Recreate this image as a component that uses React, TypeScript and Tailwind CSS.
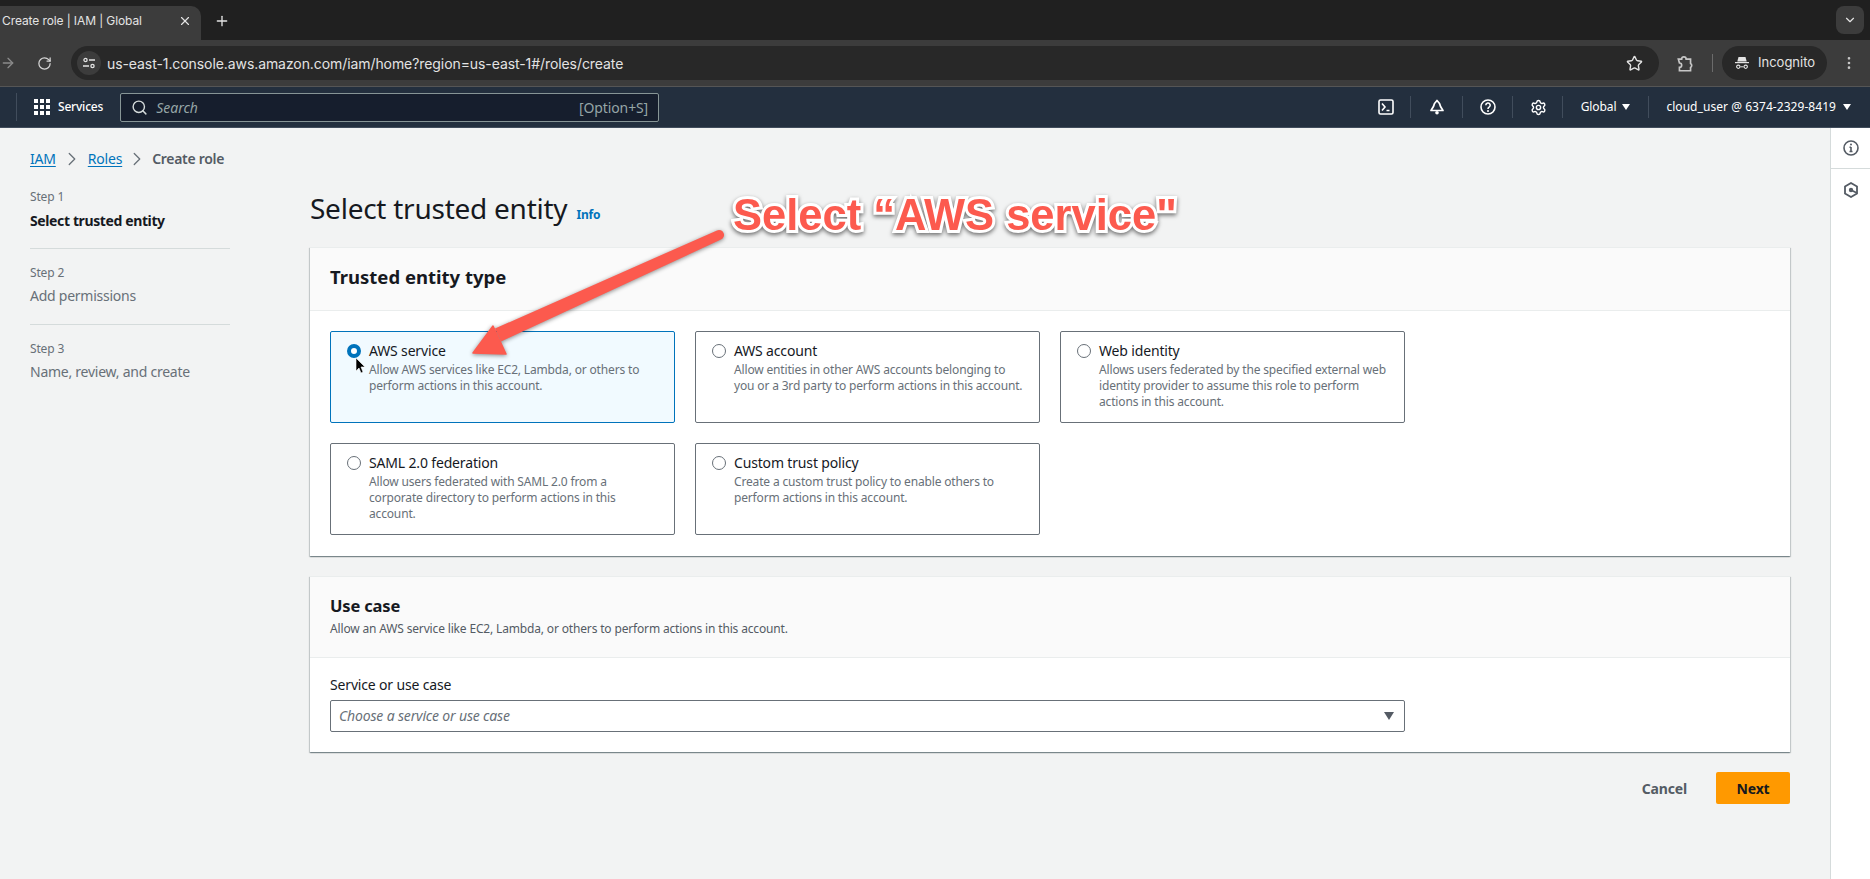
import React from 'react';
import { ArrowRight, ChevronDown, ChevronRight, EllipsisVertical, Plus, RotateCw, Search, Settings, Star, X } from 'lucide-react';

interface TrustOption {
  title: string;
  lines: string[];
  selected?: boolean;
}

const firstRow: TrustOption[] = [
  {
    title: 'AWS service',
    lines: ['Allow AWS services like EC2, Lambda, or others to', 'perform actions in this account.'],
    selected: true,
  },
  {
    title: 'AWS account',
    lines: ['Allow entities in other AWS accounts belonging to', 'you or a 3rd party to perform actions in this account.'],
  },
  {
    title: 'Web identity',
    lines: ['Allows users federated by the specified external web', 'identity provider to assume this role to perform', 'actions in this account.'],
  },
];

const secondRow: TrustOption[] = [
  {
    title: 'SAML 2.0 federation',
    lines: ['Allow users federated with SAML 2.0 from a', 'corporate directory to perform actions in this', 'account.'],
  },
  {
    title: 'Custom trust policy',
    lines: ['Create a custom trust policy to enable others to', 'perform actions in this account.'],
  },
];

const OptionCard: React.FC<{ option: TrustOption }> = ({ option }) => (
  <div
    className={`flex h-[92px] w-[345px] shrink-0 gap-[8px] rounded-[2px] border pl-[16px] pt-[9px] ${
      option.selected ? 'border-[#0073bb] bg-[#f1faff]' : 'border-[#687078] bg-white'
    }`}
  >
    <span
      className={`mt-[3px] h-[14px] w-[14px] shrink-0 rounded-full bg-white ${
        option.selected ? 'border-[4px] border-[#0073bb]' : 'border border-[#687078]'
      }`}
    />
    <div>
      <div className="text-[14px] leading-[20px] text-[#16191f]">{option.title}</div>
      <div className="mt-px">
        {option.lines.map((line) => (
          <div key={line} className="whitespace-nowrap text-[12px] leading-[16px] text-[#687078]">
            {line}
          </div>
        ))}
      </div>
    </div>
  </div>
);

const NavDivider = () => <span className="h-[22px] w-px bg-[#414d5c]" />;

const SelectTrustedEntity = () => (
  <div className="min-w-0 flex-1 pr-[40px]">
    <div className="flex h-[119px] items-start pt-[62px]">
      <h1 className="text-[28px] leading-[36px] tracking-[-0.25px] text-[#16191f]">Select trusted entity</h1>
      <a className="ml-[9px] mt-[17px] text-[12px] font-bold leading-[16px] text-[#0073bb]">Info</a>
    </div>

    <section className="h-[309px] border-t border-[#eaeded] bg-white shadow-[0_1px_1px_0_rgba(0,28,36,0.3),1px_1px_1px_0_rgba(0,28,36,0.15),-1px_1px_1px_0_rgba(0,28,36,0.15)]">
      <div className="flex h-[63px] items-center border-b border-[#eaeded] bg-[#fafafa] px-[20px] pb-[4px]">
        <h2 className="text-[18.5px] font-bold leading-[22px] tracking-normal text-[#16191f]">Trusted entity type</h2>
      </div>
      <div className="flex flex-col gap-[20px] px-[20px] pt-[20px]">
        <div className="flex gap-[20px]">
          {firstRow.map((option) => (
            <OptionCard key={option.title} option={option} />
          ))}
        </div>
        <div className="flex gap-[20px]">
          {secondRow.map((option) => (
            <OptionCard key={option.title} option={option} />
          ))}
        </div>
      </div>
    </section>

    <section className="mt-[20px] h-[176px] border-t border-[#eaeded] bg-white shadow-[0_1px_1px_0_rgba(0,28,36,0.3),1px_1px_1px_0_rgba(0,28,36,0.15),-1px_1px_1px_0_rgba(0,28,36,0.15)]">
      <div className="h-[81px] border-b border-[#eaeded] bg-[#fafafa] px-[20px] pt-[18px]">
        <h2 className="text-[16.5px] font-bold leading-[22px] text-[#16191f]">Use case</h2>
        <p className="mt-[4px] text-[12px] leading-[16px] text-[#545b64]">Allow an AWS service like EC2, Lambda, or others to perform actions in this account.</p>
      </div>
      <div className="px-[20px] pt-[17px]">
        <label className="block text-[14px] leading-[20px] text-[#16191f]">Service or use case</label>
        <div className="mt-[5px] flex h-[32px] w-[1075px] items-center justify-between rounded-[2px] border border-[#687078] bg-white pb-px pl-[8px] pr-[10px]">
          <span className="text-[14px] italic text-[#687078]">Choose a service or use case</span>
          <span className="h-0 w-0 border-x-[5px] border-t-[8px] border-x-transparent border-t-[#545b64]" />
        </div>
      </div>
    </section>

    <div className="mt-[20px] flex items-center justify-end">
      <button className="mr-[29px] text-[14px] font-bold text-[#545b64]">Cancel</button>
      <button className="h-[32px] w-[74px] rounded-[2px] bg-[#ff9900] text-[14px] font-bold text-[#16191f]">Next</button>
    </div>
  </div>
);

export default function App() {
  return (
    <div className="relative flex h-screen flex-col overflow-hidden bg-[#f2f3f3] font-['Noto_Sans',sans-serif] tracking-[-0.16px]">
      {/* browser tab strip */}
      <div className="flex h-[40px] shrink-0 items-end bg-[#202020] tracking-normal">
        <div className="flex h-[34px] w-[201px] items-center justify-between rounded-tr-[10px] bg-[#3c3c3c] pb-[4px] pl-[2px] pr-[9px] font-['Inter',sans-serif]">
          <span className="text-[12px] tracking-[-0.1px] text-[#e3e3e3]">Create role | IAM | Global</span>
          <X size={14} className="text-[#e3e3e3]" />
        </div>
        <Plus size={16} className="mb-[11px] ml-[13px] text-[#e3e3e3]" />
        <div className="mb-[6px] ml-auto mr-[6px] flex h-[28px] w-[28px] items-center justify-center rounded-[8px] bg-[#3c3c3c]">
          <ChevronDown size={14} className="text-[#e3e3e3]" />
        </div>
      </div>

      {/* browser toolbar */}
      <div className="flex h-[47px] shrink-0 items-center border-b border-[#555] bg-[#3c3c3c] font-['Inter',sans-serif] tracking-normal">
        <ArrowRight size={16} className="text-[#8a8a8a]" />
        <RotateCw size={15} className="ml-[21px] text-[#d5d5d5]" />
        <div className="ml-[19px] flex h-[34px] w-[1588px] items-center rounded-full bg-[#282828] pl-[6px] pr-[16px]">
          <span className="flex h-[24px] w-[24px] items-center justify-center rounded-full bg-[#3c3c3c]">
            <svg width="14" height="14" viewBox="0 0 14 14" fill="none" stroke="#e3e3e3" strokeWidth="1.3">
              <circle cx="3.5" cy="4" r="1.6" />
              <path d="M7 4h6M1 10h6" />
              <circle cx="10.5" cy="10" r="1.6" />
            </svg>
          </span>
          <span className="ml-[6px] text-[14px] tracking-[-0.08px] text-[#e3e3e3]">us-east-1.console.aws.amazon.com/iam/home?region=us-east-1#/roles/create</span>
          <Star size={17} className="ml-auto text-[#e3e3e3]" />
        </div>
        <svg className="ml-[16px]" width="20" height="20" viewBox="0 0 18 18" fill="none" stroke="#c7c7c7" strokeWidth="1.5">
          <path d="M3 5.500h3a2 2 0 0 1 4 0h4v4a2 2 0 0 1 0 3.500v3H4v-3a2 2 0 0 0 0-4z" />
        </svg>
        <span className="ml-[17px] h-[18px] w-px bg-[#6b6b6b]" />
        <div className="ml-[9px] flex h-[34px] w-[105px] items-center rounded-full bg-[#282828] pl-[12px]">
          <svg width="16" height="16" viewBox="0 0 16 16" fill="#e3e3e3">
            <path d="M4.500 2h7l1.200 4.400H3.300z" />
            <path d="M1 7h14v1.200H1z" />
            <path d="M4.300 9.500a2.200 2.200 0 1 0 .01 0zm7.400 0a2.200 2.200 0 1 0 .01 0zM4.300 10.700a1 1 0 1 1-.01 0zm7.400 0a1 1 0 1 1-.01 0z" fillRule="evenodd" />
            <path d="M6.500 11.300h3v1h-3z" />
          </svg>
          <span className="ml-[8px] text-[13px] text-[#e3e3e3]">Incognito</span>
        </div>
        <EllipsisVertical size={16} className="ml-[14px] text-[#c7c7c7]" />
      </div>

      {/* AWS console nav */}
      <header className="flex h-[41px] shrink-0 items-center border-b border-[#414d5c] bg-[#232f3e] text-[12px] tracking-normal text-white">
        <span className="ml-[16px] h-[28px] w-px bg-[#414d5c]" />
        <div className="ml-[17px] grid h-[16px] w-[16px] grid-cols-3 gap-[2px]">
          {Array.from({ length: 9 }).map((_, i) => (
            <span key={i} className="bg-white" />
          ))}
        </div>
        <span className="ml-[8px] font-medium tracking-[-0.2px]">Services</span>
        <div className="ml-[17px] flex h-[29px] w-[539px] items-center rounded-[2px] border border-[#879596] bg-[#161e2d] px-[10px] pt-px">
          <Search size={17} className="text-[#d5dbdb]" />
          <span className="ml-[8px] text-[14px] italic text-[#95a5a6]">Search</span>
          <span className="ml-auto text-[14px] tracking-[-0.1px] text-[#95a5a6]">[Option+S]</span>
        </div>
        <div className="ml-auto flex items-center">
          <svg width="16" height="16" viewBox="0 0 16 16" fill="none" stroke="white" strokeWidth="1.6">
            <rect x="1" y="1" width="14" height="14" rx="1.500" />
            <path d="M4 4.500 7 8l-3 3.500M8.500 11.500h3" />
          </svg>
          <span className="ml-[16px] mr-[18px] flex"><NavDivider /></span>
          <svg width="16" height="16" viewBox="0 0 16 16" fill="none" stroke="white" strokeWidth="1.7">
            <path d="M8 1.500 5.500 4.500c-.5 3-2 5-3.500 7h12c-1.500-2-3-4-3.500-7z" strokeLinejoin="round" />
            <circle cx="8" cy="13.800" r="1.800" fill="white" stroke="none" />
          </svg>
          <span className="ml-[17px] mr-[17px] flex"><NavDivider /></span>
          <svg width="16" height="16" viewBox="0 0 16 16" fill="none" stroke="white" strokeWidth="1.6">
            <circle cx="8" cy="8" r="7" />
            <path d="M5.800 6.200a2.200 2.200 0 1 1 3.300 1.900C8.400 8.500 8 9 8 10" />
            <circle cx="8" cy="12" r="1" fill="white" stroke="none" />
          </svg>
          <span className="ml-[16px] mr-[17px] flex"><NavDivider /></span>
          <Settings size={17} strokeWidth={2} className="text-white" />
          <span className="ml-[15px] mr-[18px] flex"><NavDivider /></span>
          <span className="tracking-[-0.1px]">Global</span>
          <span className="ml-[6px] h-0 w-0 border-x-[4px] border-t-[6px] border-x-transparent border-t-white" />
          <span className="ml-[18px] mr-[17px] flex"><NavDivider /></span>
          <span className="whitespace-nowrap tracking-[0.05px]">cloud_user @ 6374-2329-8419</span>
          <span className="ml-[7px] mr-[19px] h-0 w-0 border-x-[4px] border-t-[6px] border-x-transparent border-t-white" />
        </div>
      </header>

      {/* page body */}
      <div className="flex min-h-0 flex-1">
        <aside className="w-[310px] shrink-0 px-[30px] pt-[21px]">
          <nav className="flex h-[20px] items-center text-[14px] leading-[20px] tracking-[-0.2px]">
            <a className="text-[#0073bb] underline underline-offset-2">IAM</a>
            <ChevronRight size={22} strokeWidth={1.4} className="mx-[5px] text-[#687078]" />
            <a className="text-[#0073bb] underline underline-offset-2">Roles</a>
            <ChevronRight size={22} strokeWidth={1.4} className="mx-[4px] text-[#687078]" />
            <span className="font-semibold tracking-[-0.3px] text-[#545b64]">Create role</span>
          </nav>
          <div className="mt-[20px] w-[200px]">
            <div className="border-b border-[#d5dbdb] pb-[17px]">
              <div className="text-[12px] leading-[16px] text-[#687078]">Step 1</div>
              <div className="mt-[6px] text-[14px] font-bold leading-[20px] tracking-[-0.38px] text-[#16191f]">Select trusted entity</div>
            </div>
            <div className="mt-[16px] border-b border-[#d5dbdb] pb-[17px]">
              <div className="text-[12px] leading-[16px] text-[#687078]">Step 2</div>
              <div className="mt-[5px] pb-px text-[14px] leading-[20px] tracking-[-0.25px] text-[#687078]">Add permissions</div>
            </div>
            <div className="mt-[16px]">
              <div className="text-[12px] leading-[16px] text-[#687078]">Step 3</div>
              <div className="mt-[5px] text-[14px] leading-[20px] tracking-[-0.25px] text-[#687078]">Name, review, and create</div>
            </div>
          </div>
        </aside>

        <SelectTrustedEntity />

        <aside className="w-[40px] shrink-0 border-l border-[#d5dbdb] bg-white">
          <div className="flex h-[41px] items-center justify-center border-b border-[#d5dbdb]">
            <svg width="16" height="16" viewBox="0 0 16 16" fill="none" stroke="#545b64" strokeWidth="1.6">
              <circle cx="8" cy="8" r="7" />
              <path d="M8 7v5M6.500 11.500h3M6.500 7.200H8" />
              <circle cx="8" cy="4.500" r="1" fill="#545b64" stroke="none" />
            </svg>
          </div>
          <div className="flex h-[41px] items-center justify-center">
            <svg width="16" height="16" viewBox="0 0 16 16" fill="none" stroke="#545b64" strokeWidth="1.8">
              <path d="M8 1 14 4.500v7L8 15l-6-3.500v-7z" />
              <circle cx="8" cy="8" r="2.200" fill="#545b64" stroke="none" />
              <path d="M8 8l6 3" />
            </svg>
          </div>
        </aside>
      </div>

      {/* screenshot annotation */}
      <svg className="pointer-events-none absolute left-[440px] top-[210px] drop-shadow-[0_1px_2px_rgba(0,0,0,0.45)]" width="300" height="160" viewBox="0 0 300 160" fill="none">
        <path d="M281 29.600 61 131.400 55 118.600 277 20.400A5 5 0 0 1 281 29.600z" fill="#fc5a4e" />
        <path d="M33 143 53 116 66 144z" fill="#fc5a4e" stroke="#fc5a4e" strokeWidth="1.500" strokeLinejoin="round" />
      </svg>
      <div className="pointer-events-none absolute left-[733px] top-[190px] whitespace-nowrap font-['Liberation_Sans',sans-serif] text-[43.5px] font-bold leading-[50px] tracking-normal text-[#fc5a4e] [-webkit-text-stroke:6px_white] [paint-order:stroke_fill] drop-shadow-[0_2px_2px_rgba(0,0,0,0.55)]">
        Select “AWS service"
      </div>

      {/* mouse pointer */}
      <svg className="pointer-events-none absolute left-[355px] top-[358px]" width="11" height="16" viewBox="0 0 11 16">
        <path d="M1 0v13l3-3 2 5 2-1-2-5h4z" fill="black" stroke="white" strokeWidth="0.6" />
      </svg>
    </div>
  );
}
